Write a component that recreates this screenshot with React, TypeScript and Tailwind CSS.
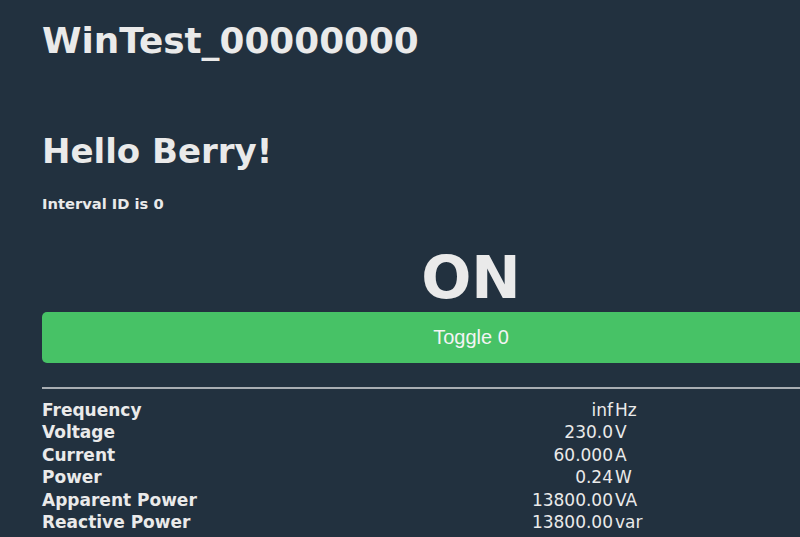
const readings = [
  { label: 'Frequency', value: 'inf', unit: 'Hz' },
  { label: 'Voltage', value: '230.0', unit: 'V' },
  { label: 'Current', value: '60.000', unit: 'A' },
  { label: 'Power', value: '0.24', unit: 'W' },
  { label: 'Apparent Power', value: '13800.00', unit: 'VA' },
  { label: 'Reactive Power', value: '13800.00', unit: 'var' },
];

export default function App() {
  return (
    <div className="min-h-screen w-full overflow-hidden bg-[#22313f] text-[#eaeaea] font-['DejaVu_Sans',Verdana,sans-serif]">
      <div className="ml-[42px] w-[858px] pt-[23px]">
        {/* Device name */}
        <h1 className="text-[35.8px] font-bold leading-none">WinTest_00000000</h1>

        <h2 className="mt-[75px] text-[34px] font-bold leading-none">Hello Berry!</h2>
        <p className="mt-[29px] text-[14.7px] font-bold leading-none">Interval ID is 0</p>

        {/* Power state */}
        <div className="mt-[36px] text-center text-[59px] font-bold leading-none">ON</div>
        <button className="mt-[5px] h-[51px] w-full rounded-[5px] bg-[#47c266] text-[20px] text-[#f4f4f4] font-['Liberation_Sans',Arial,sans-serif]">
          Toggle 0
        </button>

        <div className="mt-[24px] border-t-2 border-[#a9aeb3]" />

        {/* Sensor table */}
        <div className="mt-[10px] grid grid-cols-[190px_381px_auto] text-[17px] leading-[22.5px]">
          {readings.map((r) => (
            <div key={r.label} className="contents">
              <div className="font-bold">{r.label}</div>
              <div className="text-right">{r.value}</div>
              <div className="pl-[2px]">{r.unit}</div>
            </div>
          ))}
        </div>
      </div>
    </div>
  );
}
